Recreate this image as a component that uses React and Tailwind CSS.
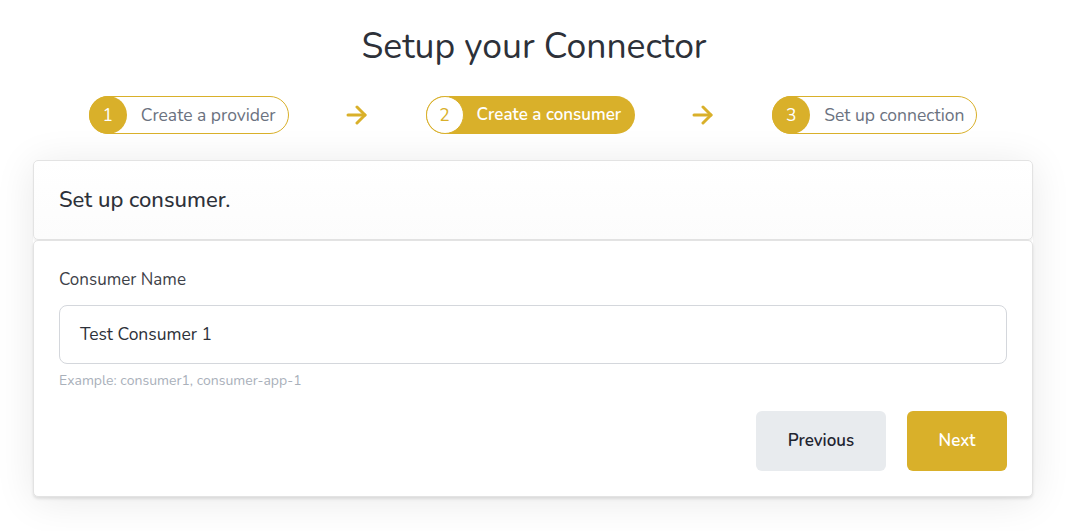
import React from "react";

function Arrow() {
  return (
    <svg width="22" height="20" viewBox="0 0 22 20" fill="none" stroke="#d9b02a" strokeWidth="3" strokeLinecap="round" strokeLinejoin="round">
      <path d="M2 10h17" />
      <path d="M11 2l8 8-8 8" />
    </svg>
  );
}

function Step({ n, label, active }) {
  if (active) {
    return (
      <div className="flex h-[38px] items-center rounded-full bg-[#d9b02a] pr-[14px]">
        <div className="flex h-[38px] w-[38px] items-center justify-center rounded-full border border-[#d9b02a] bg-white text-[17.5px] text-[#d9b02a]">
          {n}
        </div>
        <span className="ml-[13px] text-[17px] font-semibold text-white">{label}</span>
      </div>
    );
  }
  return (
    <div className="flex h-[38px] items-center rounded-full border border-[#d9b02a] bg-white pr-[12px]">
      <div className="-ml-px flex h-[38px] w-[38px] items-center justify-center rounded-full bg-[#d9b02a] text-[17.5px] text-white">
        {n}
      </div>
      <span className="ml-[14px] text-[17.5px] text-[#6b7280]">{label}</span>
    </div>
  );
}

export default function App() {
  return (
    <div
      className="min-h-[531px] w-full bg-white"
      style={{ fontFamily: "Nunito, Lato, 'Open Sans', sans-serif" }}
    >
      <div className="pr-[4px] pt-[26px] text-center text-[35.5px] leading-[42px] text-[#2d3139]">Setup your Connector</div>
      <div className="mt-[28px] flex items-center justify-center pr-[6px]">
        <div className="flex items-center gap-[57px]">
          <Step n="1" label="Create a provider" />
          <Arrow />
        </div>
        <div className="ml-[58px] flex items-center gap-[57px]">
          <Step n="2" label="Create a consumer" active />
          <Arrow />
        </div>
        <div className="ml-[58px]">
          <Step n="3" label="Set up connection" />
        </div>
      </div>
      <div className="mx-[33px] mt-[26px] w-[1000px] rounded-[5px] shadow-[0_4px_40px_rgba(0,0,0,0.09)]">
        <div className="flex h-[80px] items-center rounded-[5px] border border-[#e3e3e3] bg-gradient-to-b from-white to-[#fcfcfc] px-[25px] shadow-[0_2px_2px_rgba(0,0,0,0.06)]">
          <span className="text-[22px] font-medium text-[#2d3139]">Set up consumer.</span>
        </div>
        <div className="rounded-[5px] border border-[#e3e3e3] bg-white px-[25px] pb-[25px] pt-[29px] shadow-[0_2px_3px_rgba(0,0,0,0.1)]">
          <div className="text-[17px] leading-[20px] text-[#3d4148]">Consumer Name</div>
          <div className="mt-[15px] flex h-[59px] items-center rounded-[8px] border border-[#d4d7dc] px-[20px] text-[17.5px] text-[#2d3139]">
            Test Consumer 1
          </div>
          <div className="mt-[8px] text-[14px] leading-[18px] text-[#a9b0ba]">Example: consumer1, consumer-app-1</div>
          <div className="mt-[21px] flex justify-end gap-[21px]">
            <button className="h-[60px] w-[130px] rounded-[6px] bg-[#e8ebee] text-[17px] font-semibold text-[#1f2430]">Previous</button>
            <button className="h-[60px] w-[100px] rounded-[6px] bg-[#d9b02a] text-[17px] font-semibold text-white">Next</button>
          </div>
        </div>
      </div>
    </div>
  );
}
